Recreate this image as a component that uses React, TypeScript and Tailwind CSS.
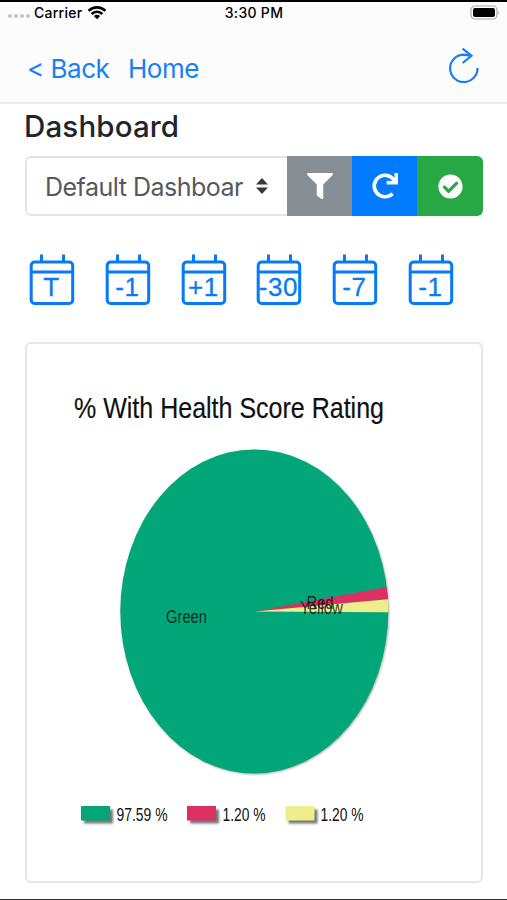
import { FaCheckCircle, FaFilter, FaRedo } from "react-icons/fa";

const periods = ["T", "-1", "+1", "-30", "-7", "-1"];

const legend = [
  { label: "97.59 %", color: "#03a678", x: 55, textX: 90.5, width: 51 },
  { label: "1.20 %", color: "#dc3062", x: 161, textX: 196.5, width: 43 },
  { label: "1.20 %", color: "#eeee8c", x: 259.5, textX: 294.5, width: 43 },
];

function StatusBar() {
  return (
    <div className="grid h-5 grid-cols-[1fr_auto_1fr] items-center pr-[7px] pl-2 text-[14px] font-medium text-black">
      <div className="flex items-center">
        <div className="mt-1.5 flex gap-[2px]">
          {[0, 1, 2, 3].map((dot) => (
            <span key={dot} className="size-[4px] rounded-full bg-[#c4c4c6]" />
          ))}
        </div>
        <span className="ml-[4px] w-[50px] tracking-[0.25px]">Carrier</span>
        <svg className="ml-[3px] h-[15px] w-5" viewBox="0 0 20 15" fill="none" stroke="#000" strokeWidth="2.6">
          <path d="M1.6 5.8a12 12 0 0 1 16.8 0" />
          <path d="M4.7 9a7.5 7.5 0 0 1 10.6 0" />
          <path d="M10 14.2l-3.1-3.1a4.4 4.4 0 0 1 6.2 0z" fill="#000" stroke="none" />
        </svg>
      </div>
      <span className="tracking-[0.3px]">3:30 PM</span>
      <svg className="h-[15px] w-[30px] justify-self-end" viewBox="0 0 30 15">
        <rect x="1" y="1" width="26" height="13" rx="4" fill="#fff" stroke="#aaa" strokeWidth="1.2" />
        <rect x="3" y="3" width="22" height="9" rx="2" fill="#000" />
        <path d="M28.5 5.5q1.5 2 0 4z" fill="#aaa" />
      </svg>
    </div>
  );
}

function CalendarButton({ label }: { label: string }) {
  return (
    <button className="h-[51px] w-[46px]">
      <svg className="h-full w-full" viewBox="0 0 46 51" fill="none" stroke="#067bf5" strokeWidth="3">
        <rect x="2.2" y="8" width="41.5" height="41.5" rx="3.5" />
        <path d="M2 18h42M12.5 0.5v7M34.5 0.5v7" />
        <text
          x="22.5"
          y="41.5"
          textAnchor="middle"
          fill="#067bf5"
          stroke="#067bf5"
          strokeWidth="0.3"
          className="font-['Liberation_Sans',sans-serif] text-[26px] tracking-[0.6px]"
        >
          {label}
        </text>
      </svg>
    </button>
  );
}

function HealthChart() {
  return (
    <svg
      className="h-full w-full font-['Liberation_Sans',sans-serif]"
      viewBox="1 0 454 537"
      fill="#111"
    >
      <defs>
        <filter id="soft" x="-20%" y="-20%" width="140%" height="140%">
          <feGaussianBlur stdDeviation="1" />
        </filter>
      </defs>
      <text x="48" y="73.5" fontSize="29" textLength="310" lengthAdjust="spacingAndGlyphs" stroke="#111" strokeWidth="0.2">
        % With Health Score Rating
      </text>

      <ellipse cx="229.1" cy="268.4" rx="134" ry="162" fill="#aaa" filter="url(#soft)" />
      <ellipse cx="228.3" cy="267.5" rx="134" ry="162" fill="#03a678" />
      <path d="M228.5 267.5L360.7 242.9A134 162 0 0 1 361.9 255.3z" fill="#dc3062" />
      <path d="M228.5 267.5L361.9 255.3A134 162 0 0 1 362.3 268.3z" fill="#eeee8c" />

      <g fontSize="18" fillOpacity="0.85">
        <text x="140" y="279" textLength="41" lengthAdjust="spacingAndGlyphs">Green</text>
        <text x="280.5" y="264.5" textLength="27" lengthAdjust="spacingAndGlyphs">Red</text>
        <text x="274" y="269.5" textLength="43" lengthAdjust="spacingAndGlyphs">Yellow</text>
      </g>

      {legend.map((item) => (
        <g key={item.x}>
          <rect x={item.x + 3} y="465.5" width="29" height="14" fill="#777" filter="url(#soft)" />
          <rect x={item.x} y="462" width="29" height="14.5" fill={item.color} />
          <text x={item.textX} y="476.5" fontSize="19" textLength={item.width} lengthAdjust="spacingAndGlyphs">
            {item.label}
          </text>
        </g>
      ))}
    </svg>
  );
}

export default function App() {
  return (
    <div className="flex h-[900px] w-[507px] flex-col overflow-hidden border-y border-t-2 border-t-black border-b-[#333] bg-white font-['Inter',sans-serif]">
      <header className="h-[102px] shrink-0 border-b-2 border-[#ececec] bg-[#fcfcfc]">
        <StatusBar />
        <nav className="flex h-20 items-center px-[27px] pt-3 text-[26px] text-[#1880f5]">
          <a className="w-[101px] tracking-[-0.5px]">&lt; Back</a>
          <a className="tracking-[-0.5px]">Home</a>
          <svg className="mr-px mb-1.5 ml-auto h-9 w-[30px]" viewBox="0 0 30 36" fill="none" stroke="#1880f5" strokeWidth="2.2">
            <path d="M28.5 21A13.7 13.7 0 1 1 14.8 7.7L22.5 8.8M13.6 1.7L22.5 8.8L13.6 16" />
          </svg>
        </nav>
      </header>

      <main className="flex flex-col pr-6 pl-[25px]">
        <h1 className="mt-1 mb-px -ml-px h-9 text-[29.5px] leading-9 font-medium tracking-[0.15px] text-[#212529]">Dashboard</h1>

        <div className="mt-[11px] flex h-[60px] overflow-hidden rounded-[6px]">
          <button className="flex flex-1 items-center justify-between rounded-l-[6px] border-2 border-r-0 border-[#e2e3e4] pr-[19px] pl-[18px] text-[25px] text-[#55595d]">
            <span className="mt-[3px] tracking-[-0.5px] whitespace-nowrap">Default Dashboar</span>
            <svg className="h-4 w-3" viewBox="0 0 4 5" preserveAspectRatio="none" fill="#343a40">
              <path d="M2 0L0 2h4zm0 5L0 3h4z" />
            </svg>
          </button>
          <button className="flex w-[65px] items-center justify-center bg-[#868e96] text-white">
            <FaFilter className="size-[26px]" />
          </button>
          <button className="flex w-[65px] items-center justify-center bg-[#007bff] text-white">
            <FaRedo className="size-[26px]" />
          </button>
          <button className="flex w-[66px] items-center justify-center bg-[#28a745] text-white">
            <FaCheckCircle className="size-[25px]" />
          </button>
        </div>

        <div className="mt-[38px] ml-1 flex gap-[29.8px]">
          {periods.map((label, idx) => (
            <CalendarButton key={idx} label={label} />
          ))}
        </div>

        <section className="mt-[37px] h-[541px] w-[458px] rounded-[6px] border-2 border-[#e7e7e7]">
          <HealthChart />
        </section>
      </main>
    </div>
  );
}
